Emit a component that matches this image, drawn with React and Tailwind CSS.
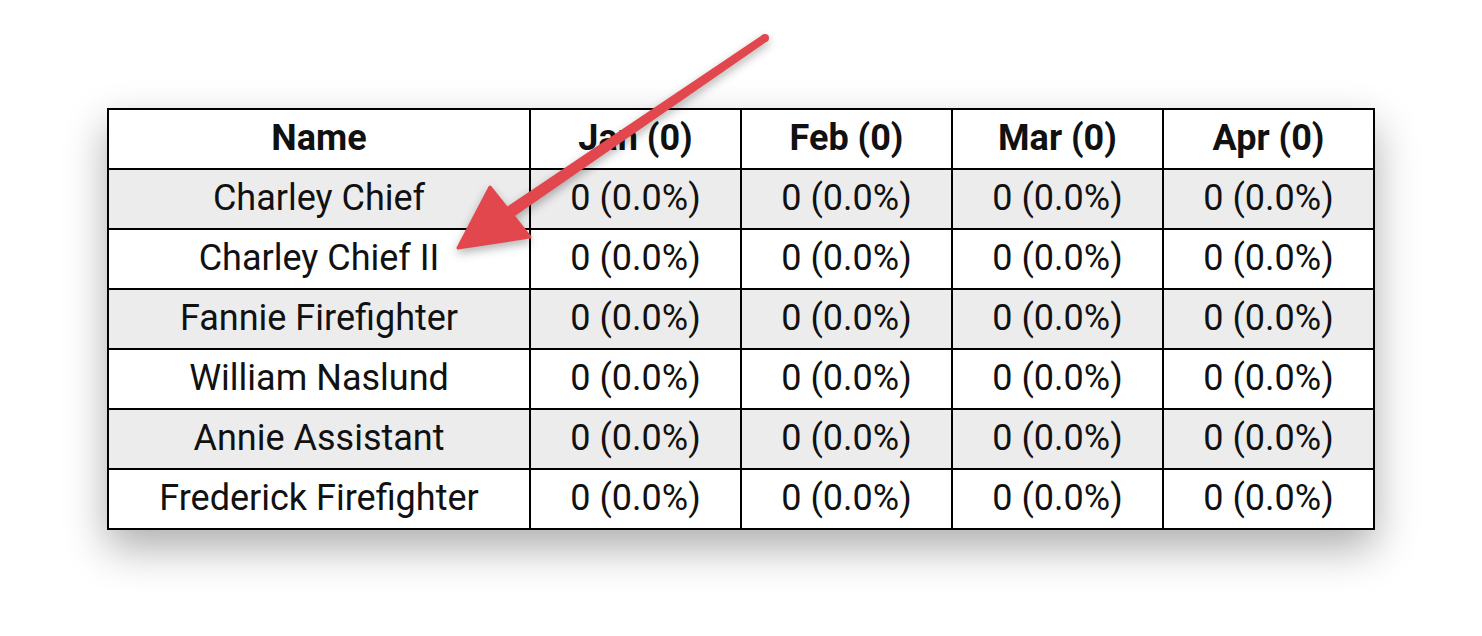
import React from "react";

const names = [
  "Charley Chief",
  "Charley Chief II",
  "Fannie Firefighter",
  "William Naslund",
  "Annie Assistant",
  "Frederick Firefighter",
];

const months = ["Jan (0)", "Feb (0)", "Mar (0)", "Apr (0)"];

function Arrow() {
  return (
    <svg
      className="absolute left-0 top-0 pointer-events-none"
      width="1482"
      height="636"
      style={{ filter: "drop-shadow(0 4px 5px rgba(0,0,0,0.3))" }}
    >
      {/* shaft */}
      <polygon points="513.4,217 506.6,207 762.7,34.7 767.3,41.3" fill="#e2474e" />
      <circle cx="765" cy="38" r="4" fill="#e2474e" />
      {/* head */}
      <polygon
        points="458,248 490,187 530,237"
        fill="#e2474e"
        stroke="#e2474e"
        strokeWidth="3"
        strokeLinejoin="round"
      />
    </svg>
  );
}

export default function App() {
  return (
    <div className="relative w-[1482px] h-[636px] bg-white overflow-hidden" style={{ fontFamily: "Roboto, 'Liberation Sans', sans-serif" }}>
      <div className="flex justify-center pt-[108px]">
        <table className="border-collapse border-2 border-black shadow-[0_18px_40px_rgba(0,0,0,0.32)] text-[36px] leading-[40px] text-[#111] table-fixed w-[1266px]">
          <colgroup>
            <col className="w-[422px]" />
            <col className="w-[211px]" />
            <col className="w-[211px]" />
            <col className="w-[211px]" />
            <col className="w-[211px]" />
          </colgroup>
          <thead>
            <tr className="h-[60px] bg-white">
              <th className="border-2 border-black font-bold text-center p-0 pb-[2px]">Name</th>
              {months.map((m) => (
                <th key={m} className="border-2 border-black font-bold text-center p-0 pb-[2px]">
                  {m}
                </th>
              ))}
            </tr>
          </thead>
          <tbody>
            {names.map((n, i) => (
              <tr key={n} className={i % 2 === 0 ? "h-[60px] bg-[#ececec]" : "h-[60px] bg-white"}>
                <td className="border-2 border-black text-center p-0 pb-[2px]">{n}</td>
                {months.map((m) => (
                  <td key={m} className="border-2 border-black text-center p-0 pb-[2px]">
                    0 (0.0%)
                  </td>
                ))}
              </tr>
            ))}
          </tbody>
        </table>
      </div>
      <Arrow />
    </div>
  );
}
